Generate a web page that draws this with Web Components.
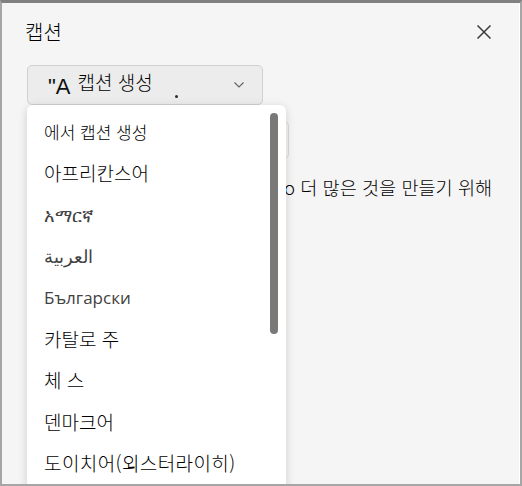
<!DOCTYPE html>
<html lang="ko">
<head>
<meta charset="utf-8">
<title>캡션</title>
<style>
  html, body { margin: 0; height: 100%; overflow: hidden; }
  body { font-family: "Noto Sans CJK KR", "Noto Sans", sans-serif; }
</style>
</head>
<body>
<caption-panel>
  <caption-select label="캡션 생성"></caption-select>
  <span slot="hint">o 더 많은 것을 만들기 위해</span>
  <language-menu slot="menu">
    <language-item style="--size:17px">에서 캡션 생성</language-item>
    <language-item>아프리칸스어</language-item>
    <language-item muted style="--size:17.5px">አማርኛ</language-item>
    <language-item muted style="--size:17.5px">العربية</language-item>
    <language-item muted style="--size:17px;--weight:400;font-family:'Open Sans',sans-serif">Български</language-item>
    <language-item>카탈로 주</language-item>
    <language-item>체 스</language-item>
    <language-item>덴마크어</language-item>
    <language-item style="letter-spacing:.4px">도이치어(외스터라이히)</language-item>
  </language-menu>
</caption-panel>

<script>
const panelTemplate = document.createElement('template');
panelTemplate.innerHTML = `
  <style>
    :host {
      display: block;
      position: relative;
      box-sizing: border-box;
      width: 522px;
      height: 486px;
      overflow: hidden;
      background: #f5f5f5;
      border-style: solid;
      border-color: #808080 #a6a6a6 #a6a6a6 #a6a6a6;
      border-width: 3px 2px 2px 2px;
      box-shadow: inset -1px 0 0 #fff;
      color: #000;
    }
    header {
      display: flex;
      justify-content: space-between;
      align-items: center;
      padding: 15px 29px 0 23px;
      height: 28px;
    }
    h2 {
      margin: 0;
      font-size: 20px;
      font-weight: 300;
      line-height: 28px;
    }
    svg { display: block; }
    .body { padding: 19px 0 0 25px; }
    .ghost {
      box-sizing: border-box;
      width: 262px;
      height: 38px;
      margin-top: 16px;
      border: 1px solid #dcdcdc;
      border-radius: 5px;
    }
    .hint {
      margin: 16px 0 0 257px;
      font-size: 18.6px;
      font-weight: 300;
      line-height: 24px;
      white-space: nowrap;
      color: #000;
    }
    ::slotted([slot="menu"]) {
      position: absolute;
      left: 25px;
      top: 102px;
    }
  </style>
  <header>
    <h2>캡션</h2>
    <svg width="14" height="14" viewBox="0 0 14 14" fill="none" stroke="#3b3b3b" stroke-width="1.5">
      <path d="M.5.5 13.5 13.5M13.5.5 .5 13.5"/>
    </svg>
  </header>
  <div class="body">
    <slot></slot>
    <div class="ghost"></div>
    <div class="hint"><slot name="hint"></slot></div>
  </div>
  <slot name="menu"></slot>
`;

class CaptionPanel extends HTMLElement {
  constructor() {
    super();
    this.attachShadow({ mode: 'open' });
    this.shadowRoot.appendChild(panelTemplate.content.cloneNode(true));
  }
}

const selectTemplate = document.createElement('template');
selectTemplate.innerHTML = `
  <style>
    :host {
      display: flex;
      position: relative;
      align-items: center;
      box-sizing: border-box;
      width: 236px;
      height: 40px;
      padding: 0 18px 0 20px;
      background: #ececec;
      border: 1px solid #d0d0d0;
      border-radius: 5px;
    }
    .icon {
      font-family: "Liberation Sans", sans-serif;
      font-size: 22px;
      color: #111;
      line-height: 24px;
      margin-top: 3px;
    }
    .label {
      flex: 1;
      margin: -7px 0 0 7px;
      font-size: 19px;
      font-weight: 300;
      color: #000;
      white-space: nowrap;
    }
    .speck {
      position: absolute;
      left: 147px;
      top: 29px;
      width: 3px;
      height: 3px;
      border-radius: 50%;
      background: #2b2b2b;
    }
  </style>
  <span class="icon">"A</span>
  <span class="label"></span>
  <span class="speck"></span>
  <svg width="10" height="6" viewBox="0 0 10 6" fill="none" stroke="#616161" stroke-width="1.1">
    <path d="M.5.5 5 5 9.5.5"/>
  </svg>
`;

class CaptionSelect extends HTMLElement {
  constructor() {
    super();
    this.attachShadow({ mode: 'open' });
    this.shadowRoot.appendChild(selectTemplate.content.cloneNode(true));
  }

  connectedCallback() {
    this.shadowRoot.querySelector('.label').textContent = this.getAttribute('label') || '';
  }
}

const menuTemplate = document.createElement('template');
menuTemplate.innerHTML = `
  <style>
    :host {
      display: block;
      box-sizing: border-box;
      width: 259px;
      height: 390px;
      padding-top: 6px;
      background: #fff;
      border-radius: 6px;
      box-shadow: 0 2px 10px rgba(0, 0, 0, 0.16);
    }
    .thumb {
      position: absolute;
      top: 8px;
      right: 8px;
      width: 8px;
      height: 221px;
      border-radius: 4px;
      background: #7b7977;
    }
  </style>
  <slot></slot>
  <div class="thumb"></div>
`;

class LanguageMenu extends HTMLElement {
  constructor() {
    super();
    this.attachShadow({ mode: 'open' });
    this.shadowRoot.appendChild(menuTemplate.content.cloneNode(true));
  }
}

const itemTemplate = document.createElement('template');
itemTemplate.innerHTML = `
  <style>
    :host {
      display: block;
      height: 41.4px;
      padding-left: 17px;
      font-size: var(--size, 19px);
      font-weight: var(--weight, 300);
      line-height: 41.4px;
      color: #000;
      white-space: nowrap;
    }
    :host([muted]) { color: #424242; }
  </style>
  <slot></slot>
`;

class LanguageItem extends HTMLElement {
  constructor() {
    super();
    this.attachShadow({ mode: 'open' });
    this.shadowRoot.appendChild(itemTemplate.content.cloneNode(true));
  }
}

customElements.define('caption-panel', CaptionPanel);
customElements.define('caption-select', CaptionSelect);
customElements.define('language-menu', LanguageMenu);
customElements.define('language-item', LanguageItem);
</script>
</body>
</html>
